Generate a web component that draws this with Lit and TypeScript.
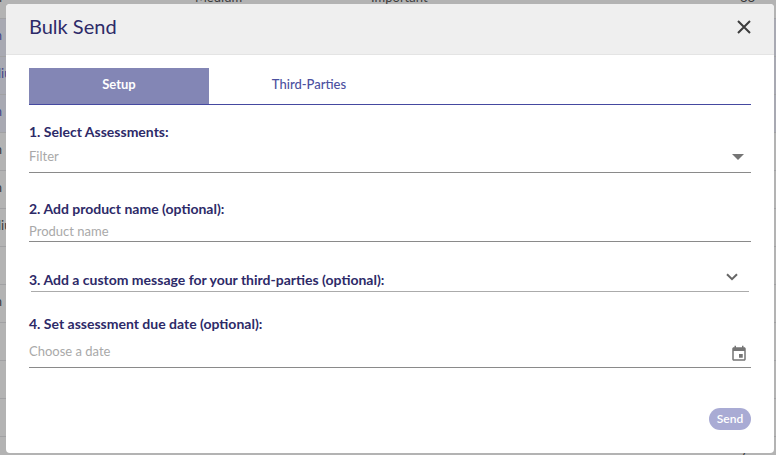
import { LitElement, html, css, svg } from "lit";
import { customElement, state } from "lit/decorators.js";
import { classMap } from "lit/directives/class-map.js";

interface Row {
  name: string;
  risk: string;
  tier: string;
  score: string;
  selected?: boolean;
}

const ROWS: Row[] = [
  { name: "High", risk: "Medium", tier: "Important", score: "88" },
  { name: "High", risk: "Low", tier: "Important", score: "", selected: true },
  { name: "Medium", risk: "Low", tier: "Critical", score: "", selected: true },
  { name: "High", risk: "High", tier: "Critical", score: "", selected: true },
  { name: "High", risk: "High", tier: "Important", score: "" },
  { name: "High", risk: "Low", tier: "Important", score: "" },
  { name: "Medium", risk: "Low", tier: "Important", score: "" },
  { name: "", risk: "", tier: "", score: "" },
  { name: "High", risk: "High", tier: "Critical", score: "" },
  { name: "", risk: "", tier: "", score: "" },
  { name: "", risk: "", tier: "", score: "" },
  { name: "", risk: "", tier: "", score: "" },
  { name: "", risk: "", tier: "", score: "7" },
];

@customElement("vendor-table")
export class VendorTable extends LitElement {
  static styles = css`
    :host {
      display: block;
      overflow: hidden;
      background: #b3b3b3;
      color: #3c3c3c;
      font: 13px/20px Lato, sans-serif;
    }
    table {
      width: calc(100% + 25px);
      margin: -20px 0 0 -25px;
      border-collapse: collapse;
      table-layout: fixed;
    }
    td {
      height: 38px;
      box-sizing: border-box;
      padding: 0 0 4px;
      border-bottom: 1px solid #a1a1a3;
      white-space: nowrap;
    }
    .name { width: 220px; }
    .risk { width: 176px; }
    .score { width: 36px; }
    .selected { background: #a8a9b2; }
    .selected .name { color: #43468a; }
  `;

  render() {
    return html`<table>
      ${ROWS.map(
        (r) => html`<tr class=${classMap({ selected: !!r.selected })}>
          <td class="name">${r.name}</td>
          <td class="risk">${r.risk}</td>
          <td>${r.tier}</td>
          <td class="score">${r.score}</td>
        </tr>`
      )}
    </table>`;
  }
}

const closeIcon = svg`<svg width="14" height="14" viewBox="0 0 14 14" aria-hidden="true">
  <path d="M1 1 13 13M13 1 1 13" fill="none" stroke="#3d3d3d" stroke-width="2"/></svg>`;
const arrowIcon = svg`<svg width="12" height="6" viewBox="0 0 12 6" aria-hidden="true">
  <path d="M0 0h12L6 6z" fill="#757575"/></svg>`;
const chevronIcon = svg`<svg width="12" height="8" viewBox="0 0 12 8" aria-hidden="true">
  <path d="M1 1.200 6 6.200 11 1.200" fill="none" stroke="#666" stroke-width="2"/></svg>`;
const calendarIcon = svg`<svg width="18" height="18" viewBox="0 0 24 24" aria-hidden="true">
  <path d="M17 12h-5v5h5v-5zM16 1v2H8V1H6v2H5c-1.110 0-1.990.9-1.990 2L3 19c0 1.100.89 2 2 2h14c1.100 0 2-.9 2-2V5c0-1.100-.9-2-2-2h-1V1h-2zm3 18H5V8h14v11z" fill="#757575"/></svg>`;

@customElement("app-root")
export class AppRoot extends LitElement {
  @state() private tab = 0;

  static styles = css`
    :host {
      display: grid;
      box-sizing: border-box;
      min-height: 100vh;
      padding: 4px 2px 2px 6px;
      position: relative;
      font: 14px/20px Lato, sans-serif;
      color: #2d2a68;
    }
    * { box-sizing: border-box; }
    button, input, select {
      font: inherit;
      color: inherit;
      margin: 0;
      padding: 0;
      border: 0;
      border-radius: 0;
      background: none;
      appearance: none;
    }
    button { cursor: pointer; }
    svg { display: block; }
    .backdrop {
      position: absolute;
      inset: 0;
    }
    .dialog {
      position: relative;
      display: flex;
      flex-direction: column;
      background: #fff;
      border-radius: 4px;
      overflow: hidden;
    }
    header {
      display: flex;
      align-items: center;
      justify-content: space-between;
      height: 51px;
      padding: 0 23px 4px;
      background: #efefef;
      border-bottom: 1px solid #e4e4e4;
    }
    h1 {
      margin: 0 0 2px;
      font-size: 20px;
      line-height: 24px;
      font-weight: 400;
    }
    .body {
      flex: 1;
      display: flex;
      flex-direction: column;
      padding: 13px 23px 23px;
    }
    .tabs {
      display: flex;
      gap: 10px;
      border-bottom: 1px solid #4549a0;
      margin-bottom: 17px;
    }
    .tab {
      width: 180px;
      height: 36px;
      padding-bottom: 4px;
      font-size: 13px;
      font-weight: 500;
      color: #4c50a0;
    }
    .tab.active {
      background: #8386b5;
      color: #fff;
      font-weight: 700;
    }
    label, .toggle { font-weight: 700; }
    label { display: block; }
    .field {
      display: flex;
      align-items: center;
      border-bottom: 1px solid #8a8a8a;
      font-size: 13px;
      color: #a9a9a9;
      position: relative;
    }
    .field input, .field select {
      flex: 1;
      min-width: 0;
      height: 100%;
      outline: none;
    }
    input::placeholder { color: #a9a9a9; opacity: 1; }
    .filter { height: 31px; margin-bottom: 26px; }
    .filter select { padding-bottom: 2px; }
    .filter svg {
      position: absolute;
      right: 7px;
      pointer-events: none;
    }
    .product { height: 23px; margin-bottom: 28px; }
    .product input { padding-top: 2px; }
    .toggle {
      display: flex;
      justify-content: space-between;
      height: 22px;
      margin: 0 2px 22px;
      border-bottom: 1px solid #ababab;
      text-align: left;
    }
    .toggle span { margin-left: -2px; }
    .toggle svg { margin: 3px 11px 0 0; }
    .date { height: 34px; }
    .date button { margin-right: 3px; padding-top: 6px; }
    .send {
      align-self: flex-end;
      margin-top: auto;
      width: 42px;
      height: 22px;
      border-radius: 11px;
      background: #a9abd4;
      color: #fff;
      font-size: 12px;
      font-weight: 600;
    }
  `;

  render() {
    return html`
      <vendor-table class="backdrop" aria-hidden="true"></vendor-table>
      <section class="dialog" role="dialog" aria-labelledby="title">
        <header>
          <h1 id="title">Bulk Send</h1>
          <button aria-label="Close">${closeIcon}</button>
        </header>
        <div class="body">
          <div class="tabs" role="tablist">
            ${["Setup", "Third-Parties"].map(
              (name, i) => html`<button
                role="tab"
                aria-selected=${this.tab === i}
                class=${classMap({ tab: true, active: this.tab === i })}
                @click=${() => (this.tab = i)}
              >${name}</button>`
            )}
          </div>
          <label for="filter">1. Select Assessments:</label>
          <div class="field filter">
            <select id="filter"><option>Filter</option></select>
            ${arrowIcon}
          </div>
          <label for="product">2. Add product name (optional):</label>
          <div class="field product">
            <input id="product" type="text" placeholder="Product name" />
          </div>
          <button class="toggle" aria-expanded="false">
            <span>3. Add a custom message for your third-parties (optional):</span>
            ${chevronIcon}
          </button>
          <label for="date">4. Set assessment due date (optional):</label>
          <div class="field date">
            <input id="date" type="text" placeholder="Choose a date" />
            <button aria-label="Open calendar">${calendarIcon}</button>
          </div>
          <button class="send">Send</button>
        </div>
      </section>
    `;
  }
}
